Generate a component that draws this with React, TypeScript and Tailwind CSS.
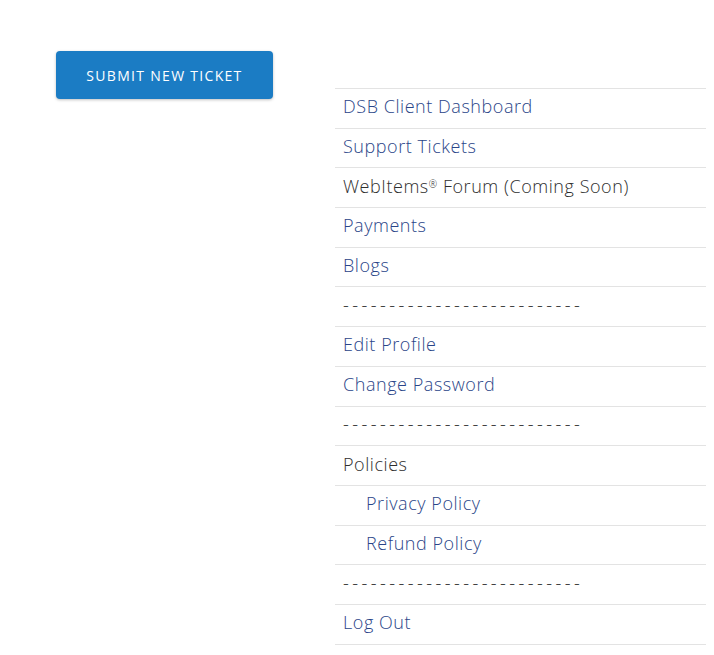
import React from "react";

type MenuItem = {
  label: React.ReactNode;
  link?: boolean;
  indent?: boolean;
  divider?: boolean;
};

const items: MenuItem[] = [
  { label: "DSB Client Dashboard", link: true },
  { label: "Support Tickets", link: true },
  {
    label: (
      <>
        WebItems<sup className="text-[10px]">®</sup> Forum (Coming Soon)
      </>
    ),
  },
  { label: "Payments", link: true },
  { label: "Blogs", link: true },
  { label: "--------------------------", divider: true },
  { label: "Edit Profile", link: true },
  { label: "Change Password", link: true },
  { label: "--------------------------", divider: true },
  { label: "Policies" },
  { label: "Privacy Policy", link: true, indent: true },
  { label: "Refund Policy", link: true, indent: true },
  { label: "--------------------------", divider: true },
  { label: "Log Out", link: true },
];

export default function App() {
  return (
    <div
      className="flex min-h-[655px] w-[714px] bg-white"
      style={{ fontFamily: '"Open Sans", "Liberation Sans", sans-serif' }}
    >
      {/* left column */}
      <div className="w-[335px] pl-[56px] pt-[51px]">
        <button className="flex h-[48px] w-[217px] items-center justify-center rounded-[4px] bg-[#1b7cc4] text-[14px] tracking-[1.3px] text-white shadow-[0_1px_3px_rgba(0,0,0,0.25)]">
          SUBMIT NEW TICKET
        </button>
      </div>

      {/* menu */}
      <div className="mt-[88px] w-[371px]">
        <ul className="border-t border-[#e3e3e3]">
          {items.map((item, i) => (
            <li
              key={i}
              className={`flex h-[39.7px] items-center border-b border-[#e3e3e3] pb-[3px] text-[18px] font-light ${
                item.indent ? "pl-[31px]" : "pl-[8px]"
              } ${item.link ? "text-[#2a4588]" : "text-[#2e2e2e]"} ${
                item.divider ? "tracking-[3.45px]" : "tracking-[0.55px]"
              }`}
            >
              <span>{item.label}</span>
            </li>
          ))}
        </ul>
      </div>
    </div>
  );
}
